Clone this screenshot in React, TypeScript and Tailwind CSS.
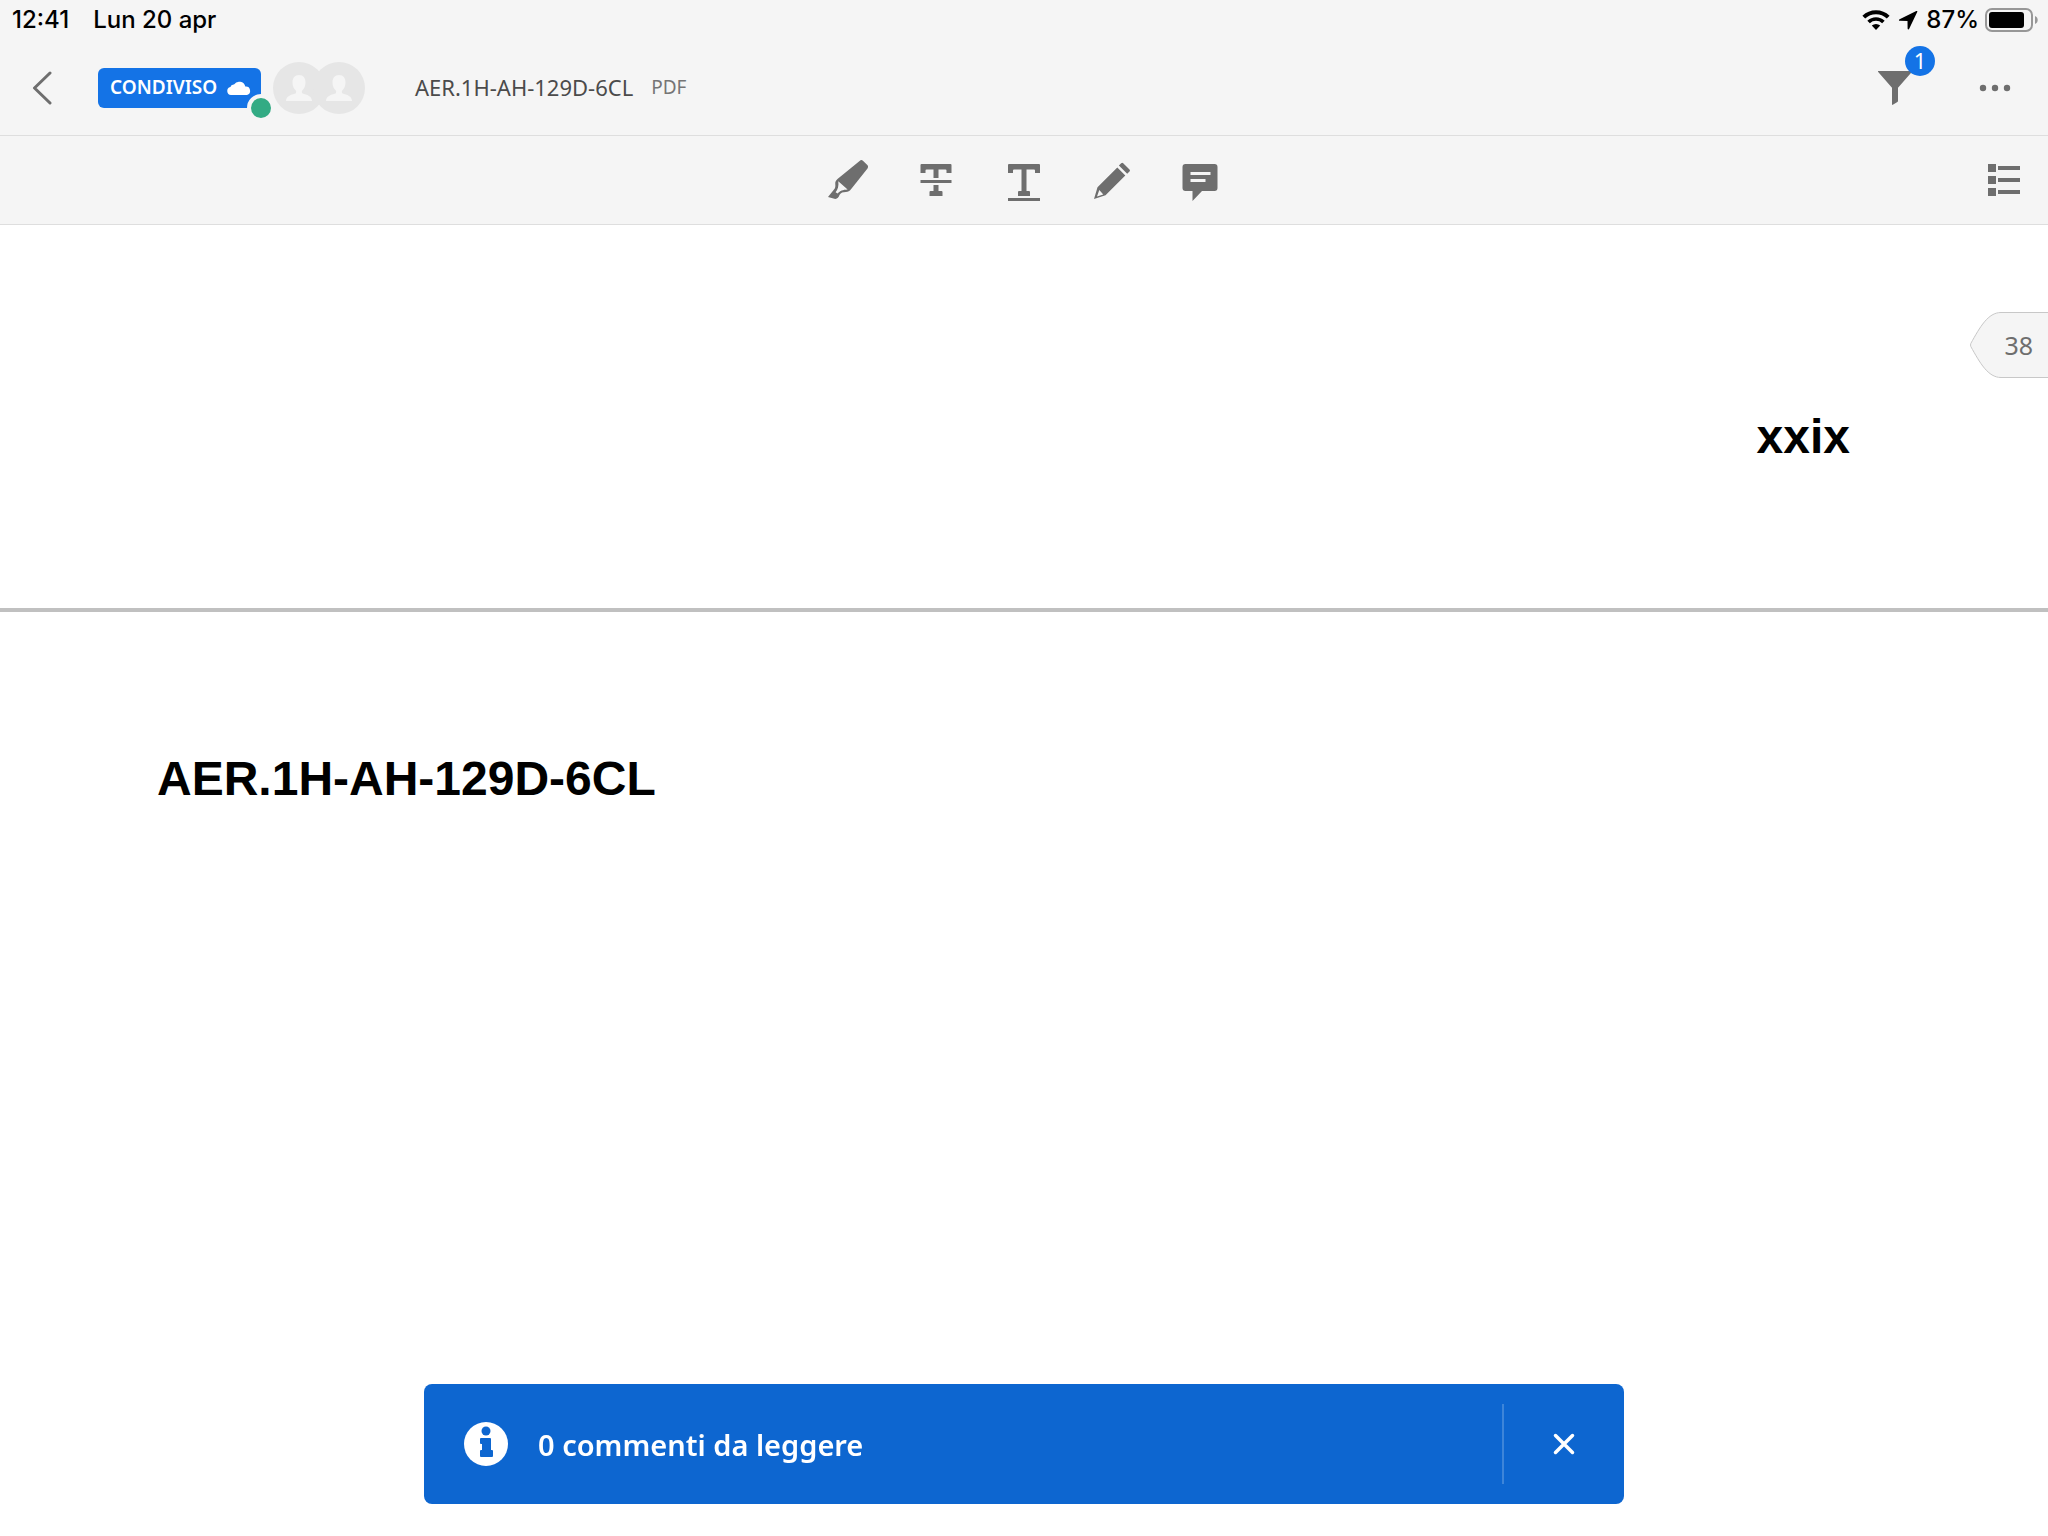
import { useState } from 'react';

function StatusBar() {
  return (
    <div className="flex h-10 items-center justify-between pl-3 pr-2 font-['Inter',sans-serif] text-2xl font-medium text-black">
      <div className="flex items-center gap-6">
        <span>12:41</span>
        <span>Lun 20 apr</span>
      </div>

      <div className="flex items-center gap-2">
        <svg className="h-5 w-7" viewBox="0 0 28 20" fill="none" stroke="currentColor">
          <path d="M1.8 7.1a17.5 17.5 0 0 1 24.4 0" strokeWidth="4" />
          <path d="M6.6 12a10.6 10.6 0 0 1 14.8 0" strokeWidth="3.6" />
          <path d="M14 20l-4.2-4.4a6 6 0 0 1 8.4 0z" fill="currentColor" stroke="none" />
        </svg>
        <svg className="size-5" viewBox="0 0 20 20" fill="currentColor">
          <path d="M18.3 1.1 1.6 9.2c-1 .5-.8 1.5.2 1.6l7.7.1.1 7.6c.1 1.1 1.1 1.3 1.6.3l8-16.700c.4-.8-.1-1.4-.9-1z" />
        </svg>
        <div className="flex items-center gap-1.5">
          <span>87%</span>
          <svg className="h-6 w-[55px]" viewBox="0 0 55 24" fill="none">
            <rect x="1" y="1" width="46" height="22" rx="6" stroke="#979797" strokeWidth="2" />
            <rect x="4" y="4" width="35" height="16" rx="3" fill="#000" />
            <path d="M50 8c3.6 1.2 3.6 6.800 0 8z" fill="#979797" />
          </svg>
        </div>
      </div>
    </div>
  );
}

function Avatar() {
  return (
    <svg className="size-[52px]" viewBox="0 0 52 52">
      <circle cx="26" cy="26" r="26" fill="#e6e6e6" />
      <path
        fill="#f5f5f5"
        d="M26 13c4.2 0 6.5 3 6.5 7.5 0 3.5-1.3 6.3-3.3 8-.6.6-.5 2.5.3 2.9 4.5 1.1 9.500 2.700 9.500 7.600H13c0-4.900 5-6.500 9.500-7.600.8-.4.9-2.300.3-2.900-2-1.700-3.300-4.500-3.300-8C19.500 16 21.800 13 26 13z"
      />
    </svg>
  );
}

function Header() {
  return (
    <header className="flex h-24 items-center justify-between border-b border-[#dedede] pl-5 pr-[31px]">
      <div className="flex items-center">
        <button type="button" aria-label="Indietro" className="flex size-11 items-center justify-center">
          <svg className="h-9 w-5" viewBox="0 0 20 36" fill="none" stroke="#6e6e6e" strokeWidth="3" strokeLinecap="round">
            <path d="M18 3 2.500 18 18 33" strokeLinejoin="round" />
          </svg>
        </button>

        <button
          type="button"
          className="relative ml-[34px] flex h-10 w-[163px] items-center justify-between rounded-md bg-[#1473e6] pl-3 pr-2.5 text-[19px] font-semibold text-white"
        >
          CONDIVISO
          <svg className="h-3.5 w-6" viewBox="0 0 24 14" fill="currentColor">
            <path d="M4 14a4 4 0 0 1-.6-7.900A3.400 3.400 0 0 1 7 3.400a6.300 6.300 0 0 1 11.300 2.200A4.300 4.300 0 0 1 20 14z" />
          </svg>
          <span className="absolute -bottom-3.5 -right-3.5 size-7 rounded-full border-4 border-[#f5f5f5] bg-[#33ab84]" />
        </button>

        <div className="ml-3 flex -space-x-3">
          <Avatar />
          <Avatar />
        </div>

        <h1 className="ml-[50px] text-[22px] text-[#4b4b4b]">AER.1H-AH-129D-6CL</h1>
        <span className="ml-[18px] text-[19px] text-[#757575]">PDF</span>
      </div>

      <div className="flex items-center gap-14">
        <button type="button" aria-label="Filtri" className="relative flex size-11 items-center justify-center">
          <svg className="size-9" viewBox="0 0 36 36" fill="#6e6e6e">
            <path d="M1.600 1h32.800c.6 0 .8.600.4 1L21 17.800V31c0 .5-.2.800-.6 1l-4.600 2.800c-.5.300-.8 0-.8-.5V17.800L1.200 2c-.4-.4-.2-1 .4-1z" />
          </svg>
          <span className="absolute -right-[18px] -top-5 flex size-[30px] items-center justify-center rounded-full bg-[#1473e6] text-[22px] text-white">
            1
          </span>
        </button>
        <button type="button" aria-label="Altro" className="flex size-11 items-center justify-center">
          <svg className="h-2 w-8" viewBox="0 0 32 8" fill="#6e6e6e">
            <circle cx="4" cy="4" r="3.200" />
            <circle cx="16" cy="4" r="3.200" />
            <circle cx="28" cy="4" r="3.200" />
          </svg>
        </button>
      </div>
    </header>
  );
}

const tools = [
  {
    label: 'Evidenzia',
    icon: (
      <path
        fillRule="evenodd"
        d="M33.600 2.900c1.200-1.200 2.300-1.200 3.300-.2l4.400 4.400c1 1 1 2.100.2 3.300L25 31.200c-1.500 2-2.800 2.700-5.200 2.700-2.800.1-4.900.600-6.200 2.800-1 2.500-2 4-4.300 4.200L2 38.900l6-7.300c1.300-1.600 1.500-3.200 1.300-5.200-.3-2.300.4-3.700 2.200-5.300zM12.300 23.200l9.300 8.300c-4.900.3-7.400 1.200-10 4.100l-2-1.300c2.300-3.200 3.300-6.200 2.700-11.100z"
      />
    ),
  },
  {
    label: 'Barrato',
    icon: <path d="M7.500 6h29a1 1 0 0 1 1 1v8h-5v-2.500a1 1 0 0 0-1-1h-7V20h-5v-8.500h-7a1 1 0 0 0-1 1V15h-5V7a1 1 0 0 1 1-1zM6.500 22h31v3h-31zM19.500 27h5v6h3a1 1 0 0 1 1 1v4h-13v-4a1 1 0 0 1 1-1h3z" />,
  },
  {
    label: 'Sottolinea',
    icon: <path d="M7 6h30a1 1 0 0 1 1 1v8h-5v-2.500a1 1 0 0 0-1-1h-7.500V33H27a1 1 0 0 1 1 1v4H16v-4a1 1 0 0 1 1-1h2.500V11.500H12a1 1 0 0 0-1 1V15H6V7a1 1 0 0 1 1-1zM6 40h32v3H6z" />,
  },
  {
    label: 'Disegna',
    icon: (
      <path
        fillRule="evenodd"
        d="M31.200 5.200a1.400 1.400 0 0 1 2 0l6.300 6.300a1.400 1.400 0 0 1 0 2l-2.300 2.300-8.300-8.300zM27.300 9.500l8 8-19.800 19.800L4 41 7.500 29.300zM9.300 32.100 7 38.400l6.300-2z"
      />
    ),
  },
  {
    label: 'Commento',
    icon: (
      <path
        fillRule="evenodd"
        d="M7.500 6h29a3 3 0 0 1 3 3v21a3 3 0 0 1-3 3H24l-9.500 10V33h-7a3 3 0 0 1-3-3V9a3 3 0 0 1 3-3zm5 8v3h20v-3zm0 7v3h15v-3z"
      />
    ),
  },
];

function Toolbar() {
  return (
    <div className="flex h-[89px] items-center border-b border-[#dedede] px-5">
      <div className="flex-1" />
      <div className="flex gap-11">
        {tools.map(tool => (
          <button key={tool.label} type="button" aria-label={tool.label}>
            <svg className="size-11" viewBox="0 0 44 44" fill="#6e6e6e">
              {tool.icon}
            </svg>
          </button>
        ))}
      </div>
      <div className="flex flex-1 justify-end">
        <button type="button" aria-label="Elenco commenti" className="px-2">
          <svg className="size-8" viewBox="0 0 32 32" fill="#6e6e6e">
            <path d="M0 0h8v8H0zM0 12h8v8H0zM0 24h8v8H0zM10 2h22v4H10zM10 14h22v4H10zM10 26h22v4H10z" />
          </svg>
        </button>
      </div>
    </div>
  );
}

function PageMarker() {
  return (
    <div className="absolute right-0 top-[87px] flex h-[66px] w-[78px] items-center justify-end pr-[15px]">
      <svg className="absolute inset-0" viewBox="0 0 78 66" fill="#f5f5f5" stroke="#c8c8c8">
        <path d="M80 .5H31C18 .5 10 15 .8 31.500q-.6 1.500 0 3C10 51 18 65.500 31 65.500h49" />
      </svg>
      <span className="relative font-['Noto_Sans',sans-serif] text-[25px] font-normal text-[#6e6e6e]">38</span>
    </div>
  );
}

function Snackbar({ onClose }: { onClose: () => void }) {
  return (
    <div
      role="status"
      className="fixed inset-x-0 bottom-8 mx-auto flex h-[120px] w-full max-w-[1200px] items-center rounded-lg bg-[#0d66d0] pl-10 text-white"
    >
      <svg className="size-11" viewBox="0 0 44 44">
        <circle cx="22" cy="22" r="22" fill="#fff" />
        <circle cx="22" cy="9" r="4.500" fill="#0d66d0" />
        <path d="M17 16h9a1 1 0 0 1 1 1v11h1a1 1 0 0 1 1 1v5a1 1 0 0 1-1 1H17a1 1 0 0 1-1-1v-5a1 1 0 0 1 1-1h1v-6h-1a1 1 0 0 1-1-1v-4a1 1 0 0 1 1-1z" fill="#0d66d0" />
      </svg>
      <p className="ml-[30px] flex-1 pt-0.5 text-[29px] font-semibold">0 commenti da leggere</p>
      <div className="flex h-20 w-[122px] border-l-2 border-[#3d85d9]">
        <button type="button" aria-label="Chiudi" onClick={onClose} className="flex flex-1 items-center justify-center">
          <svg className="size-6" viewBox="0 0 24 24" stroke="currentColor" strokeWidth="3.500" strokeLinecap="round">
            <path d="M3.500 3.500l17 17M20.500 3.500l-17 17" />
          </svg>
        </button>
      </div>
    </div>
  );
}

export default function App() {
  const [showSnackbar, setShowSnackbar] = useState(true);

  return (
    <div className="flex min-h-screen flex-col bg-white font-['Noto_Sans',sans-serif]">
      <div className="bg-[#f5f5f5]">
        <StatusBar />
        <Header />
        <Toolbar />
      </div>

      <main className="relative flex-1 font-['Liberation_Sans',sans-serif] text-5xl font-bold text-black">
        <section className="flex h-[387px] justify-end border-b-4 border-[#c0c0c0] pr-[198px] pt-[188px]">
          <p>xxix</p>
        </section>
        <section className="px-[157px] pt-[143px]">
          <p>AER.1H-AH-129D-6CL</p>
        </section>
        <PageMarker />
      </main>

      {showSnackbar && <Snackbar onClose={() => setShowSnackbar(false)} />}
    </div>
  );
}
